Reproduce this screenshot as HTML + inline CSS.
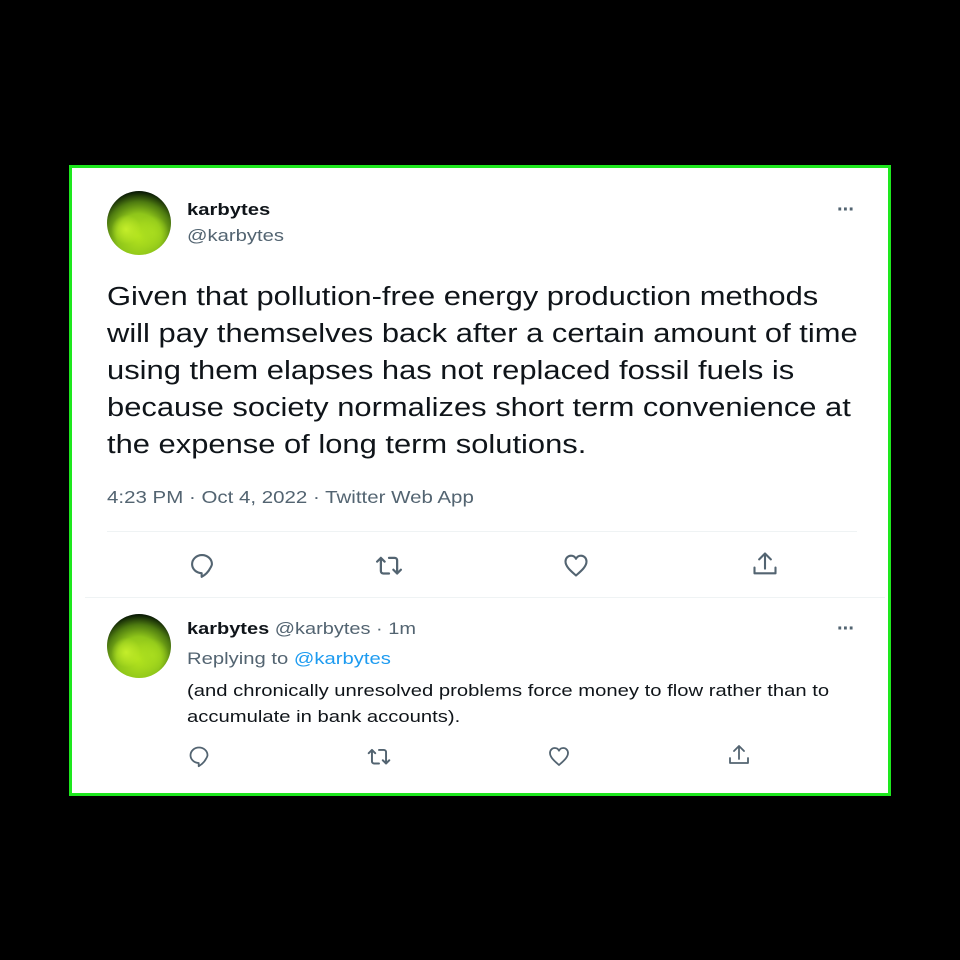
<!DOCTYPE html>
<html><head><style>
body{margin:0;background:#000;width:960px;height:960px;position:relative;font-family:"Liberation Sans",sans-serif;overflow:hidden}
.card{position:absolute;left:69px;top:165px;width:816px;height:625px;background:#fff;border:3px solid #1ee81e}
.a{position:absolute;color:#0f1419;white-space:nowrap;transform:scaleX(1.19);transform-origin:0 0}
.av{position:absolute;width:64px;height:64px;border-radius:50%;background:radial-gradient(circle at 30% 60%,#c4ee2a 0,transparent 25%),radial-gradient(circle at 70% 65%,#a8dc1e 0,transparent 28%),radial-gradient(circle at 50% 70%,#b6e61e 0,#8fc61a 40%,#4d7a10 62%,#0a1a05 80%)}
.g{color:#536471}
.line{position:absolute;height:1px;background:#eff3f4}
svg{position:absolute;fill:none;stroke:#536471;stroke-width:1.8;stroke-linecap:round;stroke-linejoin:round}
.dots{position:absolute;font-size:20px;color:#536471;letter-spacing:-1px;font-weight:bold}
</style></head><body>
<div class="card"></div>
<div class="av" style="left:107px;top:191px"></div>
<div class="a" style="left:187px;top:200px;font-weight:bold;font-size:17px">karbytes</div>
<div class="a g" style="left:187px;top:226px;font-size:17px">@karbytes</div>
<div class="dots" style="left:837px;top:199px">···</div>
<div class="a" style="left:107px;top:279px;font-size:25.5px;line-height:37px;transform:scaleX(1.212)">Given that pollution-free energy production methods<br>will pay themselves back after a certain amount of time<br>using them elapses has not replaced fossil fuels is<br>because society normalizes short term convenience at<br>the expense of long term solutions.</div>
<div class="a g" style="left:107px;top:487px;font-size:17.5px;transform:scaleX(1.17)">4:23 PM · Oct 4, 2022 · Twitter Web App</div>
<div class="line" style="left:107px;top:531px;width:750px"></div>
<svg style="left:188px;top:551px" width="28" height="28" viewBox="0 0 24 24"><path d="M12 3.5c-4.7 0-8.5 3.5-8.5 7.8 0 4.2 3.6 7.5 8.2 7.7v3.2c3.5-2 5.9-4.6 7.3-7.4 1-1.7 1.5-3.4 1.5-3.6 0-4.3-3.8-7.7-8.5-7.7z"/></svg>
<svg style="left:374px;top:551px" width="30" height="30" viewBox="0 0 24 24"><path d="M2.5 8.5L5.5 5.5L8.5 8.5M5.5 6V16a2 2 0 0 0 2 2H12M12 5.5h4.5a2 2 0 0 1 2 2v10.5M15.5 15l3 3 3-3"/></svg>
<svg style="left:562px;top:551px" width="28" height="28" viewBox="0 0 24 24"><path d="M12 21c-4-3.5-9-7.5-9-12 0-3 2.3-5 4.7-5 2 0 3.5 1 4.3 2.7C12.8 5 14.3 4 16.3 4 18.7 4 21 6 21 9c0 4.5-5 8.5-9 12z"/></svg>
<svg style="left:751px;top:550px" width="28" height="28" viewBox="0 0 24 24"><path d="M12 3v13M7 8l5-5 5 5M3 15v5h18v-5"/></svg>
<div class="line" style="left:85px;top:597px;width:800px"></div>
<div class="av" style="left:107px;top:614px"></div>
<div class="a" style="left:187px;top:619px;font-size:17px;transform:scaleX(1.175)"><b>karbytes</b> <span class="g">@karbytes · 1m</span></div>
<div class="dots" style="left:837px;top:618px">···</div>
<div class="a g" style="left:187px;top:649px;font-size:17px">Replying to <span style="color:#1d9bf0">@karbytes</span></div>
<div class="a" style="left:187px;top:678px;font-size:17px;line-height:26px">(and chronically unresolved problems force money to flow rather than to<br>accumulate in bank accounts).</div>
<svg style="left:187px;top:744px" width="24" height="24" viewBox="0 0 24 24"><path d="M12 3.5c-4.7 0-8.5 3.5-8.5 7.8 0 4.2 3.6 7.5 8.2 7.7v3.2c3.5-2 5.9-4.6 7.3-7.4 1-1.7 1.5-3.4 1.5-3.6 0-4.3-3.8-7.7-8.5-7.7z"/></svg>
<svg style="left:366px;top:744px" width="26" height="26" viewBox="0 0 24 24"><path d="M2.5 8.5L5.5 5.5L8.5 8.5M5.5 6V16a2 2 0 0 0 2 2H12M12 5.5h4.5a2 2 0 0 1 2 2v10.5M15.5 15l3 3 3-3"/></svg>
<svg style="left:547px;top:744px" width="24" height="24" viewBox="0 0 24 24"><path d="M12 21c-4-3.5-9-7.5-9-12 0-3 2.3-5 4.7-5 2 0 3.5 1 4.3 2.7C12.8 5 14.3 4 16.3 4 18.7 4 21 6 21 9c0 4.5-5 8.5-9 12z"/></svg>
<svg style="left:727px;top:743px" width="24" height="24" viewBox="0 0 24 24"><path d="M12 3v13M7 8l5-5 5 5M3 15v5h18v-5"/></svg>
</body></html>
